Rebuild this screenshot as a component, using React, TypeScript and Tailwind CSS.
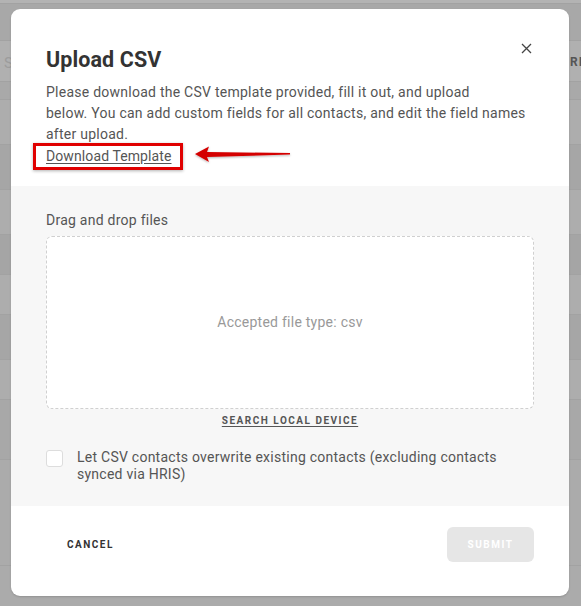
import React from "react";

const font = { fontFamily: "Roboto, 'Noto Sans', sans-serif" };

export default function App() {
  const bands = [
    { h: "h-[4px]", c: "bg-[#b3b3b3]" },
    { h: "h-[37px]", c: "bg-[#a8a8a8]" },
    { h: "h-[41px]", c: "bg-[#b0b0b0]" },
    { h: "h-[18px]", c: "bg-[#a9a9a9]" },
    { h: "h-[45px]", c: "bg-[#adadad]" },
    { h: "h-[45px]", c: "bg-[#a6a6a6]" },
    { h: "h-[45px]", c: "bg-[#adadad]" },
    { h: "h-[40px]", c: "bg-[#a5a5a5]" },
    { h: "h-[40px]", c: "bg-[#adadad]" },
    { h: "h-[45px]", c: "bg-[#a6a6a6]" },
    { h: "h-[40px]", c: "bg-[#adadad]" },
    { h: "h-[60px]", c: "bg-[#a8a8a8]" },
    { h: "h-[106px]", c: "bg-[#ababab]" },
  ];
  return (
    <div className="relative w-[581px] h-[606px] overflow-hidden bg-[#ababab]" style={font}>
      <div className="flex flex-col">
        {bands.map((b, i) => (
          <div key={i} className={`${b.h} ${b.c} border-b border-[#a2a2a2]`} />
        ))}
      </div>
      <div className="absolute left-[4px] top-[52px] text-[15px] text-[#9c9c9c]">S</div>
      <div className="absolute left-[570px] top-[53px] text-[12px] font-bold tracking-[1px] text-[#555]">RI</div>

      <div className="absolute left-[11px] top-[9px] w-[558px] h-[587px] bg-white rounded-[9px] overflow-hidden flex flex-col shadow-[0_1px_2px_rgba(0,0,0,0.15)]">
        <div className="relative px-[35px] pt-[36px] h-[177px]">
          <button className="absolute right-[37px] top-[34px] text-[#444]">
            <svg width="11" height="11" viewBox="0 0 11 11">
              <path d="M1 1 L10 10 M10 1 L1 10" stroke="#444" strokeWidth="1.3" />
            </svg>
          </button>
          <h1 className="text-[21.5px] leading-[30px] font-bold text-[#333] tracking-[0.1px]">Upload CSV</h1>
          <p className="mt-[7px] w-[490px] text-[14px] leading-[21px] text-[#555] tracking-[0.25px]">
            Please download the CSV template provided, fill it out, and upload
            <br />
            below. You can add custom fields for all contacts, and edit the field names
            <br />
            after upload.
          </p>
          <div className="flex items-center">
            <div className="ml-[-13px] mt-[-2px] border-[3px] border-[#e00000] pl-[10px] pr-[8px] h-[27px] flex items-center shadow-[0_1px_3px_rgba(0,0,0,0.3)]">
              <span className="text-[14px] text-[#555] tracking-[0.1px] underline underline-offset-2">Download Template</span>
            </div>
            <svg className="ml-[10px] mt-[-6px]" width="100" height="20" viewBox="0 0 100 20">
              <defs>
                <filter id="sh" x="-10%" y="-50%" width="120%" height="200%">
                  <feDropShadow dx="0" dy="1" stdDeviation="1" floodColor="#000" floodOpacity="0.3" />
                </filter>
              </defs>
              <path
                d="M2 9 L16 1.5 L14 7 L97 8 L97 9.5 L14 12 L16 17 Z"
                fill="#d40000"
                filter="url(#sh)"
              />
            </svg>
          </div>
        </div>

        <div className="bg-[#f7f7f7] px-[35px] pt-[24px] h-[320px]">
          <div className="text-[14px] leading-[20px] text-[#555] tracking-[0.25px]">Drag and drop files</div>
          <div className="mt-[6px] h-[173px] bg-white border border-dashed border-[#d0d0d0] rounded-[6px] flex items-center justify-center">
            <span className="text-[14px] text-[#999] tracking-[0.25px]">Accepted file type: csv</span>
          </div>
          <div className="mt-[4px] flex justify-center">
            <span className="text-[10px] font-bold tracking-[1.5px] text-[#555] underline underline-offset-2">SEARCH LOCAL DEVICE</span>
          </div>
          <div className="mt-[21px] flex items-start gap-[14px]">
            <div className="mt-[1px] w-[17px] h-[17px] bg-white border border-[#ddd] rounded-[3px] shrink-0" />
            <span className="text-[14px] leading-[17px] text-[#555] tracking-[0.25px]">
              Let CSV contacts overwrite existing contacts (excluding contacts synced via HRIS)
            </span>
          </div>
        </div>

        <div className="flex-1 flex items-center justify-between px-[35px] pb-[14px]">
          <button className="ml-[21px] text-[10px] font-bold tracking-[1.5px] text-[#333]">CANCEL</button>
          <button className="w-[87px] h-[35px] rounded-[6px] bg-[#e6e6e6] text-[10px] font-bold tracking-[1.5px] text-white">SUBMIT</button>
        </div>
      </div>
    </div>
  );
}
